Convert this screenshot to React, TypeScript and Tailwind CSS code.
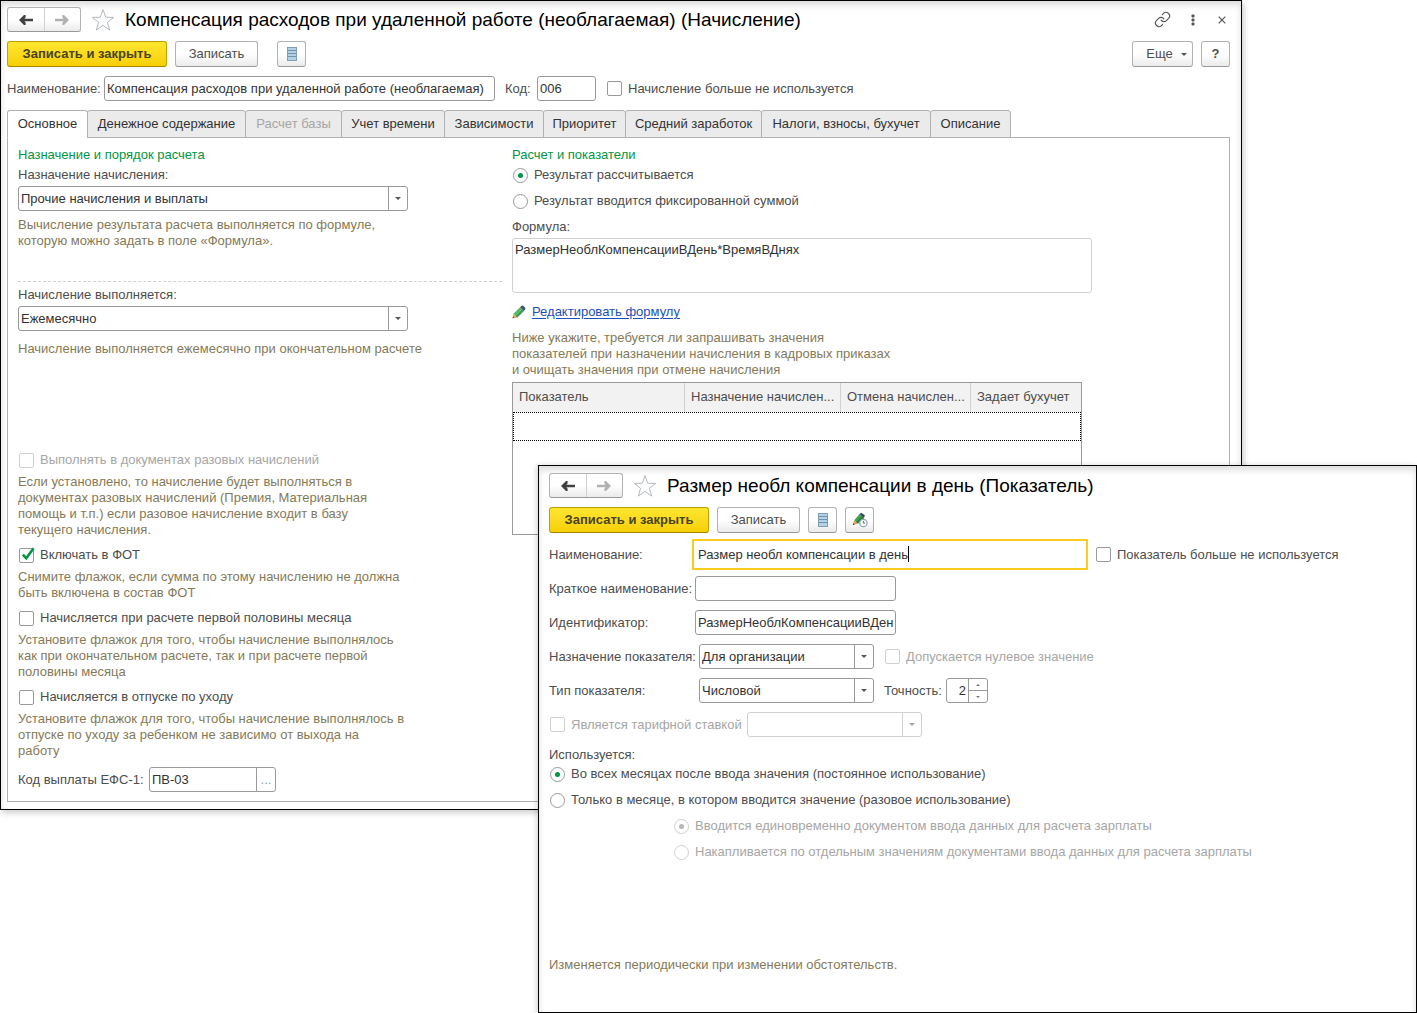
import { useId, type ReactNode } from "react";
import { Link } from "lucide-react";

const GRAY_BUTTON =
  "flex h-[26px] items-center justify-center rounded-[3px] border border-[#b3b3b3] border-b-[#999999] bg-linear-to-b from-white from-50% to-[#ebebeb] text-[#4d4d4d]";

function ArrowLeft({ className }: { className: string }) {
  return (
    <svg viewBox="0 0 14 10" className={`h-[10px] w-[14px] ${className}`} fill="currentColor" aria-hidden="true">
      <path d="M5 0 0 5l5 5h1.6V7.4L5.4 6.2H14V3.8H5.4L6.6 2.6V0z" />
    </svg>
  );
}

function Star() {
  return (
    <svg viewBox="0 0 24 24" className="h-[24px] w-[24px]" fill="none" stroke="#b4b9be" strokeWidth="1" aria-hidden="true">
      <path d="M12 1.6l2.7 7.6 8.1.2-6.4 4.9 2.3 7.8L12 17.4l-6.7 4.7 2.3-7.8L1.2 9.4l8.1-.2z" />
    </svg>
  );
}

function ListIcon() {
  return (
    <svg viewBox="0 0 10 14" className="h-[14px] w-[10px]" aria-hidden="true">
      <rect x="0.5" y="0.5" width="9" height="13" fill="#b5d0e3" stroke="#7d9fb8" />
      <path d="M1 3.5h8M1 6.5h8M1 9.5h8" stroke="#6d95b2" strokeWidth="1" />
    </svg>
  );
}

function PencilIcon() {
  return (
    <svg viewBox="0 0 14 14" className="h-[14px] w-[14px]" aria-hidden="true">
      <path d="M0.6 13.3 1.4 8.8 5.2 12.6z" fill="#e9a65a" />
      <path d="M0.6 13.3 1 11.6 2.3 12.8z" fill="#3a3a3a" />
      <path d="M1.4 8.8 8 2.2 11.8 6 5.2 12.6z" fill="#5bb96a" />
      <path d="M3.8 11.2 10.4 4.6 11.8 6 5.2 12.6z" fill="#3c9a4c" />
      <path d="M8 2.2 9.6 0.8Q10.6 0.2 11.6 1L13 2.4Q13.8 3.4 13.1 4.5L11.8 6z" fill="#44546a" />
    </svg>
  );
}

function PencilClockIcon() {
  return (
    <svg viewBox="0 0 16 16" className="h-[16px] w-[16px]" aria-hidden="true">
      <path d="M0.8 13 2.2 8.2 6 11.6z" fill="#e0a060" />
      <path d="M0.8 13 1.3 11.3 2.7 12.4z" fill="#3a3a3a" />
      <path d="M2.2 8.2 7.4 2.2 12 6 6 11.6z" fill="#3fa652" />
      <path d="M4.2 10 9.8 4.2 12 6 6 11.6z" fill="#2d7f3c" />
      <path d="M7.4 2.2 9.2 0.7 12.9 3.2 12 6z" fill="#3c4a58" />
      <circle cx="11.4" cy="11" r="3.7" fill="#ffffff" stroke="#8fa3b5" strokeWidth="1.2" />
      <path d="M11.4 8.9V11.2H13.3" fill="none" stroke="#5f7488" strokeWidth="1" />
    </svg>
  );
}

function NavButtons() {
  return (
    <div className="flex h-[25px] w-[74px] shrink-0 rounded-[3px] border border-[#b3b3b3] border-b-[#999999] bg-linear-to-b from-white from-50% to-[#ebebeb]">
      <button type="button" aria-label="Назад" className="flex flex-1 items-center justify-center border-r border-[#d0d0d0]">
        <ArrowLeft className="text-[#404040]" />
      </button>
      <button type="button" aria-label="Вперед" className="flex flex-1 items-center justify-center">
        <ArrowLeft className="rotate-180 text-[#b0b0b0]" />
      </button>
    </div>
  );
}

function TitleBar({ title, children }: { title: string; children?: ReactNode }) {
  return (
    <header className="flex h-[25px] items-center">
      <NavButtons />
      <button type="button" aria-label="В избранное" className="ml-[10px]">
        <Star />
      </button>
      <h1 className="ml-[10px] flex-1 text-[19px] leading-[24px] whitespace-nowrap text-black">{title}</h1>
      {children}
    </header>
  );
}

function SaveButtons() {
  return (
    <>
      <button
        type="button"
        className="h-[26px] w-[160px] rounded-[3px] border border-[#c0a000] border-b-[#a08600] bg-linear-to-b from-[#ffe62e] to-[#f7d000] font-bold text-[#4a4422]"
      >
        Записать и закрыть
      </button>
      <button type="button" className={`${GRAY_BUTTON} ml-2 w-[83px]`}>
        Записать
      </button>
    </>
  );
}

function Check({
  label,
  checked = false,
  disabled = false,
}: {
  label: string;
  checked?: boolean;
  disabled?: boolean;
}) {
  return (
    <label className={`flex h-4 items-center gap-[6px] pl-px whitespace-nowrap ${disabled ? "text-[#a6a6a6]" : "text-[#4d4d4d]"}`}>
      <span className="relative flex">
        <input
          type="checkbox"
          defaultChecked={checked}
          disabled={disabled}
          className="peer h-[15px] w-[15px] appearance-none rounded-[2px] border border-[#999999] bg-white disabled:border-[#d0d0d0]"
        />
        <svg viewBox="0 0 15 15" className="pointer-events-none absolute -top-px left-px hidden h-[15px] w-[15px] peer-checked:block" aria-hidden="true">
          <path d="M2.8 7.6 6.2 11.2 13.6 1.2" fill="none" stroke="#009646" strokeWidth="2.6" />
        </svg>
      </span>
      {label}
    </label>
  );
}

function Radio({
  label,
  name,
  checked = false,
  disabled = false,
}: {
  label: string;
  name: string;
  checked?: boolean;
  disabled?: boolean;
}) {
  return (
    <label className={`flex h-4 items-center gap-[6px] pl-px whitespace-nowrap ${disabled ? "text-[#a6a6a6]" : "text-[#4d4d4d]"}`}>
      <input
        type="radio"
        name={name}
        defaultChecked={checked}
        disabled={disabled}
        className="flex h-[15px] w-[15px] appearance-none items-center justify-center rounded-full border border-[#999999] bg-white before:h-[5px] before:w-[5px] before:rounded-full checked:before:bg-[#009646] disabled:border-[#d0d0d0] disabled:checked:before:bg-[#b8b8b8]"
      />
      {label}
    </label>
  );
}

function Caret({ className = "border-t-[#555555]" }: { className?: string }) {
  return <span className={`h-0 w-0 border-x-[3px] border-t-[3px] border-x-transparent ${className}`} />;
}

function Select({
  id,
  value,
  width,
  label,
  disabled = false,
}: {
  id: string;
  value: string;
  width: string;
  label?: string;
  disabled?: boolean;
}) {
  const line = disabled ? "border-[#d0d0d0]" : "border-[#999999]";
  return (
    <div className={`relative h-[25px] ${width}`}>
      <select
        id={id}
        aria-label={label}
        disabled={disabled}
        defaultValue={value}
        className={`h-full w-full appearance-none rounded-[3px] border bg-white pr-5 pl-[2px] text-[#333333] ${line}`}
      >
        <option>{value}</option>
      </select>
      <span className={`pointer-events-none absolute inset-y-px right-px flex w-[19px] items-center justify-center border-l ${line}`}>
        <Caret className={disabled ? "border-t-[#a6a6a6]" : "border-t-[#555555]"} />
      </span>
    </div>
  );
}

function Hint({ lines, className = "" }: { lines: string[]; className?: string }) {
  return (
    <p className={`leading-4 whitespace-nowrap text-[#857a58] ${className}`}>
      {lines.map((line) => (
        <span key={line} className="block">
          {line}
        </span>
      ))}
    </p>
  );
}

const TEXT_INPUT = "h-[25px] rounded-[3px] border border-[#999999] bg-white px-[2px] text-[#333333]";

const TABS = [
  { label: "Основное", width: "w-[81px]" },
  { label: "Денежное содержание", width: "w-[159px]" },
  { label: "Расчет базы", width: "w-[97px]" },
  { label: "Учет времени", width: "w-[104px]" },
  { label: "Зависимости", width: "w-[100px]" },
  { label: "Приоритет", width: "w-[83px]" },
  { label: "Средний заработок", width: "w-[137px]" },
  { label: "Налоги, взносы, бухучет", width: "w-[170px]" },
  { label: "Описание", width: "w-[81px]" },
];

function Tabs() {
  return (
    <div role="tablist" className="flex">
      {TABS.map((tab, i) => (
        <button
          key={tab.label}
          type="button"
          role="tab"
          aria-selected={i === 0}
          disabled={i === 2}
          className={`-mr-px h-7 shrink-0 rounded-t-[3px] border border-[#b0b0b0] text-[#333333] disabled:text-[#a6a6a6] ${tab.width} ${
            i === 0 ? "border-b-white bg-white" : "bg-[#ebebeb]"
          }`}
        >
          {tab.label}
        </button>
      ))}
    </div>
  );
}

function PurposeColumn() {
  const purpose = useId();
  const period = useId();
  const code = useId();
  return (
    <section className="flex flex-col">
      <h2 className="leading-4 text-[#009646]">Назначение и порядок расчета</h2>
      <label htmlFor={purpose} className="mt-1 mb-[3px] leading-4">
        Назначение начисления:
      </label>
      <Select id={purpose} value="Прочие начисления и выплаты" width="w-[390px]" />
      <Hint
        className="mt-[6px]"
        lines={["Вычисление результата расчета выполняется по формуле,", "которую можно задать в поле «Формула»."]}
      />
      <hr className="mt-8 mb-[5px] border-t border-dashed border-[#d0d0d0]" />
      <label htmlFor={period} className="mb-[3px] leading-4">
        Начисление выполняется:
      </label>
      <Select id={period} value="Ежемесячно" width="w-[390px]" />
      <Hint className="mt-[10px] mb-[95px]" lines={["Начисление выполняется ежемесячно при окончательном расчете"]} />

      <div className="flex flex-col gap-[9px]">
        <div className="flex flex-col gap-[6px]">
          <Check label="Выполнять в документах разовых начислений" disabled />
          <Hint
            lines={[
              "Если установлено, то начисление будет выполняться в",
              "документах разовых начислений (Премия, Материальная",
              "помощь и т.п.) если разовое начисление входит в базу",
              "текущего начисления.",
            ]}
          />
        </div>
        <div className="flex flex-col gap-[6px]">
          <Check label="Включать в ФОТ" checked />
          <Hint lines={["Снимите флажок, если сумма по этому начислению не должна", "быть включена в состав ФОТ"]} />
        </div>
        <div className="flex flex-col gap-[6px]">
          <Check label="Начисляется при расчете первой половины месяца" />
          <Hint
            lines={[
              "Установите флажок для того, чтобы начисление выполнялось",
              "как при окончательном расчете, так и при расчете первой",
              "половины месяца",
            ]}
          />
        </div>
        <div className="flex flex-col gap-[6px]">
          <Check label="Начисляется в отпуске по уходу" />
          <Hint
            lines={[
              "Установите флажок для того, чтобы начисление выполнялось в",
              "отпуске по уходу за ребенком не зависимо от выхода на",
              "работу",
            ]}
          />
        </div>
      </div>
      <div className="mt-2 flex items-center">
        <label htmlFor={code} className="w-[131px]">
          Код выплаты ЕФС-1:
        </label>
        <div className="flex h-[25px] w-[127px] rounded-[3px] border border-[#999999] bg-white">
          <input id={code} defaultValue="ПВ-03" className="min-w-0 flex-1 px-[2px] text-[#333333] outline-none" />
          <button type="button" aria-label="Выбрать" className="w-[19px] border-l border-[#999999] text-[#999999]">
            ...
          </button>
        </div>
      </div>
    </section>
  );
}

const COLUMNS = [
  { label: "Показатель", width: "w-[172px]" },
  { label: "Назначение начислен...", width: "w-[156px]" },
  { label: "Отмена начислен...", width: "w-[130px]" },
  { label: "Задает бухучет", width: "" },
];

function CalculationColumn() {
  const formula = useId();
  return (
    <section className="flex flex-col">
      <h2 className="mb-1 leading-4 text-[#009646]">Расчет и показатели</h2>
      <div className="flex flex-col gap-[10px]">
        <Radio name="result" label="Результат рассчитывается" checked />
        <Radio name="result" label="Результат вводится фиксированной суммой" />
      </div>
      <label htmlFor={formula} className="mt-[10px] mb-[3px] leading-4">
        Формула:
      </label>
      <textarea
        id={formula}
        readOnly
        defaultValue="РазмерНеоблКомпенсацииВДень*ВремяВДнях"
        className="h-[55px] w-[580px] resize-none rounded-[3px] border border-[#d0d0d0] px-[2px] py-[3px] leading-4 text-[#333333]"
      />
      <div className="mt-[11px] flex h-4 items-center gap-[6px]">
        <PencilIcon />
        <a href="#formula" className="text-[#1a50b8] underline underline-offset-2">
          Редактировать формулу
        </a>
      </div>
      <Hint
        className="mt-[10px] mb-1"
        lines={[
          "Ниже укажите, требуется ли запрашивать значения",
          "показателей при назначении начисления в кадровых приказах",
          "и очищать значения при отмене начисления",
        ]}
      />
      <div className="h-[153px] w-[570px] border border-[#999999]">
        <table className="w-full table-fixed border-separate border-spacing-0">
          <thead>
            <tr className="h-[29px] bg-[#f2f2f2]">
              {COLUMNS.map((column) => (
                <th
                  key={column.label}
                  scope="col"
                  className={`border-r border-[#d0d0d0] pb-[2px] pl-[6px] text-left font-normal whitespace-nowrap last:border-r-0 ${column.width}`}
                >
                  {column.label}
                </th>
              ))}
            </tr>
          </thead>
          <tbody>
            <tr className="h-[29px] outline-1 -outline-offset-1 outline-black outline-dotted">
              <td colSpan={4} />
            </tr>
          </tbody>
        </table>
      </div>
    </section>
  );
}

function AccrualWindow() {
  const name = useId();
  const code = useId();
  return (
    <main className="mr-[175px] border border-black bg-white pt-[6px] pr-[11px] pb-[7px] pl-[6px] shadow-[2px_3px_6px_rgba(0,0,0,0.2),inset_0_4px_6px_rgba(0,0,0,0.14)]">
      <TitleBar title="Компенсация расходов при удаленной работе (необлагаемая) (Начисление)">
        <div className="flex items-center text-[#555555]">
          <button type="button" aria-label="Получить ссылку" className="mr-[20px]">
            <Link size={17} strokeWidth={1.6} />
          </button>
          <button type="button" aria-label="Меню" className="mr-[23px]">
            <svg viewBox="0 0 4 12" className="h-[12px] w-[4px]" fill="currentColor" aria-hidden="true">
              <rect x="0.5" y="0.5" width="3" height="3" rx="1" />
              <rect x="0.5" y="4.5" width="3" height="3" rx="1" />
              <rect x="0.5" y="8.5" width="3" height="3" rx="1" />
            </svg>
          </button>
          <button type="button" aria-label="Закрыть" className="mr-[4px]">
            <svg viewBox="0 0 8 8" className="h-[8px] w-[8px]" stroke="currentColor" strokeWidth="1.2" aria-hidden="true">
              <path d="M0.7 0.7 7.3 7.3M7.3 0.7 0.7 7.3" />
            </svg>
          </button>
        </div>
      </TitleBar>

      <div className="mt-[9px] flex">
        <SaveButtons />
        <button type="button" aria-label="Список" className={`${GRAY_BUTTON} ml-[19px] w-[29px]`}>
          <ListIcon />
        </button>
        <button type="button" className={`${GRAY_BUTTON} mr-2 ml-auto w-[61px] gap-2 pl-2`}>
          Еще
          <Caret />
        </button>
        <button type="button" className={`${GRAY_BUTTON} w-[29px] font-bold`}>
          ?
        </button>
      </div>

      <div className="mt-[9px] flex items-center">
        <label htmlFor={name} className="w-[97px]">
          Наименование:
        </label>
        <input
          id={name}
          defaultValue="Компенсация расходов при удаленной работе (необлагаемая)"
          className={`${TEXT_INPUT} w-[391px]`}
        />
        <label htmlFor={code} className="ml-[10px] w-[32px]">
          Код:
        </label>
        <input id={code} defaultValue="006" className={`${TEXT_INPUT} mr-[10px] w-[59px]`} />
        <Check label="Начисление больше не используется" />
      </div>

      <div className="relative z-10 mt-[9px]">
        <Tabs />
      </div>
      <div className="-mt-px grid grid-cols-[484px_1fr] gap-x-[10px] border border-[#b0b0b0] px-[10px] pt-[9px] pb-[9px]">
        <PurposeColumn />
        <CalculationColumn />
      </div>
    </main>
  );
}

function IndicatorWindow() {
  const id = useId();
  return (
    <section className="absolute inset-y-0 right-0 left-[538px] z-20 mt-[465px] border border-black bg-white px-[10px] pt-[7px] shadow-[-2px_0_5px_rgba(0,0,0,0.15),inset_0_4px_6px_rgba(0,0,0,0.14)]">
      <TitleBar title="Размер необл компенсации в день (Показатель)" />
      <div className="mt-[9px] flex">
        <SaveButtons />
        <button type="button" aria-label="Список" className={`${GRAY_BUTTON} ml-2 w-[29px]`}>
          <ListIcon />
        </button>
        <button type="button" aria-label="История изменений" className={`${GRAY_BUTTON} ml-2 w-[29px]`}>
          <PencilClockIcon />
        </button>
      </div>

      <div className="mt-[6px] flex items-center">
        <label htmlFor={`${id}-name`} className="w-[143px]">
          Наименование:
        </label>
        <div className="relative mr-[7px] h-[31px] w-[396px]">
          <input
            id={`${id}-name`}
            defaultValue="Размер необл компенсации в день"
            className="h-full w-full border-2 border-[#fbcc1c] bg-white px-1 text-[#333333] outline-none"
          />
          <span className="absolute top-[7px] left-[216px] h-4 w-px bg-black" />
        </div>
        <Check label="Показатель больше не используется" />
      </div>

      <div className="mt-[6px] flex flex-col gap-[9px]">
        <div className="flex items-center">
          <label htmlFor={`${id}-short`} className="w-[146px] whitespace-nowrap">
            Краткое наименование:
          </label>
          <input id={`${id}-short`} className={`${TEXT_INPUT} w-[201px]`} />
        </div>
        <div className="flex items-center">
          <label htmlFor={`${id}-ident`} className="w-[146px]">
            Идентификатор:
          </label>
          <input id={`${id}-ident`} defaultValue="РазмерНеоблКомпенсацииВДень" className={`${TEXT_INPUT} w-[201px]`} />
        </div>
        <div className="flex items-center">
          <label htmlFor={`${id}-purpose`} className="w-[150px] whitespace-nowrap">
            Назначение показателя:
          </label>
          <Select id={`${id}-purpose`} value="Для организации" width="mr-[10px] w-[175px]" />
          <Check label="Допускается нулевое значение" disabled />
        </div>
        <div className="flex items-center">
          <label htmlFor={`${id}-type`} className="w-[150px]">
            Тип показателя:
          </label>
          <Select id={`${id}-type`} value="Числовой" width="mr-[10px] w-[175px]" />
          <label htmlFor={`${id}-precision`} className="w-[62px]">
            Точность:
          </label>
          <div className="flex h-[25px] w-[42px] rounded-[3px] border border-[#999999] bg-white">
            <input
              id={`${id}-precision`}
              defaultValue="2"
              inputMode="numeric"
              className="w-[21px] pr-[2px] text-right text-[#333333] outline-none"
            />
            <div className="flex flex-1 flex-col border-l border-[#999999]">
              <button type="button" aria-label="Увеличить" className="flex flex-1 items-center justify-center border-b border-[#999999]">
                <span className="h-0 w-0 border-x-2 border-b-2 border-x-transparent border-b-[#777777]" />
              </button>
              <button type="button" aria-label="Уменьшить" className="flex flex-1 items-center justify-center">
                <span className="h-0 w-0 border-x-2 border-t-2 border-x-transparent border-t-[#777777]" />
              </button>
            </div>
          </div>
        </div>
        <div className="flex items-center">
          <div className="w-[198px]">
            <Check label="Является тарифной ставкой" disabled />
          </div>
          <Select id={`${id}-rate`} label="Тарифная ставка" value="" width="w-[175px]" disabled />
        </div>
      </div>

      <fieldset className="mt-[10px]">
        <legend className="mb-[3px] leading-4">Используется:</legend>
        <div className="flex flex-col gap-[10px]">
          <Radio name="usage" label="Во всех месяцах после ввода значения (постоянное использование)" checked />
          <Radio name="usage" label="Только в месяце, в котором вводится значение (разовое использование)" />
          <div className="flex flex-col gap-[10px] pl-[124px]">
            <Radio name="entry" label="Вводится единовременно документом ввода данных для расчета зарплаты" checked disabled />
            <Radio name="entry" label="Накапливается по отдельным значениям документами ввода данных для расчета зарплаты" disabled />
          </div>
        </div>
      </fieldset>

      <Hint className="mt-[97px]" lines={["Изменяется периодически при изменении обстоятельств."]} />
    </section>
  );
}

export default function App() {
  return (
    <div className="relative min-h-screen bg-white font-['Liberation_Sans',Arial,sans-serif] text-[13px] leading-4 text-[#4d4d4d]">
      <AccrualWindow />
      <IndicatorWindow />
    </div>
  );
}
